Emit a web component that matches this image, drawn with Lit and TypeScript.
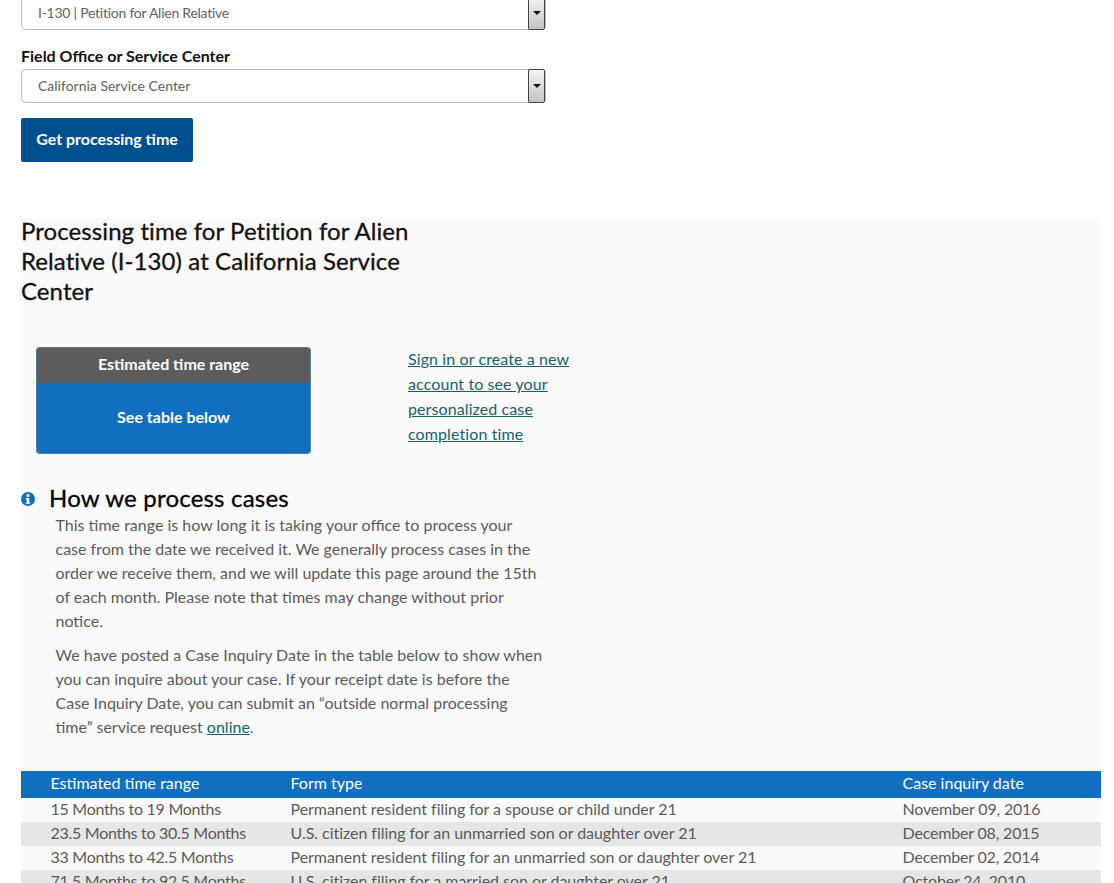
import { LitElement, html, css } from "lit";
import { customElement } from "lit/decorators.js";

const rows = [
  ["15 Months to 19 Months", "Permanent resident filing for a spouse or child under 21", "November 09, 2016"],
  ["23.5 Months to 30.5 Months", "U.S. citizen filing for an unmarried son or daughter over 21", "December 08, 2015"],
  ["33 Months to 42.5 Months", "Permanent resident filing for an unmarried son or daughter over 21", "December 02, 2014"],
  ["71.5 Months to 92.5 Months", "U.S. citizen filing for a married son or daughter over 21", "October 24, 2010"],
];

@customElement("app-root")
export class AppRoot extends LitElement {
  static styles = css`
    :host { display: block; height: 883px; overflow: hidden; background: #fff; font-family: "Lato", "Noto Sans", sans-serif; color: #5a5a5a; font-size: 16px; }
    .form { padding: 0 0 0 21px; width: 525px; margin-top: -4px; }
    .select { box-sizing: border-box; height: 34px; width: 525px; border: 1px solid #bbb; border-radius: 4px; background: #fff; display: flex; align-items: center; justify-content: space-between; padding: 0 0 2px 16px; font-size: 14px; color: #5f5f5f; }
    .select .first { letter-spacing: -0.25px; }
    .arrow { width: 17px; height: 34px; box-sizing: border-box; border: 1px solid #444; border-radius: 2px; margin: 0 0 -2px 0; background: linear-gradient(#f4f4f4, #c4c4c4); display: flex; align-items: center; justify-content: center; }
    .arrow i { display: block; width: 0; height: 0; border-left: 4px solid transparent; border-right: 4px solid transparent; border-top: 4px solid #111; }
    label { display: block; font-weight: 700; color: #111; font-size: 16px; line-height: 20px; margin: 16px 0 3px; }
    .btn { display: inline-block; margin-top: 15px; height: 42px; padding-bottom: 2px; width: 172px; line-height: 42px; text-align: center; background: #00508f; color: #fff; font-weight: 700; font-size: 16px; border-radius: 2px; }
    .panel { margin: 56px 13px 0 21px; background: #fafafa; height: 700px; }
    h1 { margin: 0; width: 400px; font-weight: 400; font-size: 24px; line-height: 30px; color: #111; letter-spacing: 0.08px; -webkit-text-stroke: 0.3px #111; position: relative; top: -2px; }
    .mid { display: flex; margin-top: 39px; padding-left: 15px; }
    .box { box-sizing: border-box; width: 275px; height: 107px; border-radius: 3px; overflow: hidden; border: 1px solid #5a7d9e; color: #fff; font-weight: 700; text-align: center; }
    .box .h { height: 36px; line-height: 33px; background: #5c5c5c; margin: -1px -1px 0; }
    .box .b { height: 70px; line-height: 68px; background: #116fc0; }
    .link { margin-left: 97px; margin-top: -1px; width: 180px; line-height: 25px; color: #15616d; text-decoration: underline; letter-spacing: 0.1px; }
    .how { display: flex; align-items: center; margin-top: 29px; height: 30px; }
    .how svg { width: 14px; height: 14px; margin: 2px 14px 0 0; }
    h2 { margin: 0; font-weight: 400; font-size: 24px; color: #000; line-height: 30px; letter-spacing: 0.2px; -webkit-text-stroke: 0.3px #000; }
    .text { margin-left: 34.5px; width: 490px; line-height: 24px; color: #5a5a5a; }
    .text p { margin: 0 0 10px; }
    .text a { color: #15616d; }
    .table { margin-top: 32px; }
    .tr { display: grid; grid-template-columns: 240px 612px 1fr; padding-left: 29.5px; height: 24px; line-height: 22px; }
    .tr span:nth-child(1) { letter-spacing: -0.28px; }
    .tr span:nth-child(2) { letter-spacing: -0.04px; }
    .tr span:nth-child(3) { letter-spacing: -0.18px; }
    .tr.head { height: 27px; line-height: 24px; background: #116fc0; color: #fff; }
    .tr.head span { letter-spacing: 0; }
    .tr.alt { background: #e6e6e6; }
    .tr.plain { background: #fafafa; }
  `;

  render() {
    return html`
      <div class="form">
        <div class="select"><span class="first">I-130 | Petition for Alien Relative</span><div class="arrow"><i></i></div></div>
        <label>Field Office or Service Center</label>
        <div class="select"><span>California Service Center</span><div class="arrow"><i></i></div></div>
        <div class="btn">Get processing time</div>
      </div>
      <div class="panel">
        <h1>Processing time for Petition for Alien Relative (I-130) at California Service Center</h1>
        <div class="mid">
          <div class="box"><div class="h">Estimated time range</div><div class="b">See table below</div></div>
          <div class="link">Sign in or create a new account to see your personalized case completion time</div>
        </div>
        <div class="how">
          <svg viewBox="0 0 14 14"><circle cx="7" cy="7" r="7" fill="#116fc0"/><circle cx="7" cy="3.6" r="1.5" fill="#fff"/><path d="M4.8 6h3.4v4.4h1v1.4H4.8v-1.4h1V7.4h-1z" fill="#fff"/></svg>
          <h2>How we process cases</h2>
        </div>
        <div class="text">
          <p>This time range is how long it is taking your office to process your case from the date we received it. We generally process cases in the order we receive them, and we will update this page around the 15th of each month. Please note that times may change without prior notice.</p>
          <p>We have posted a Case Inquiry Date in the table below to show when you can inquire about your case. If your receipt date is before the Case Inquiry Date, you can submit an “outside normal processing time” service request <a href="#">online</a>.</p>
        </div>
        <div class="table">
          <div class="tr head"><span>Estimated time range</span><span>Form type</span><span>Case inquiry date</span></div>
          ${rows.map((r, i) => html`<div class="tr ${i % 2 ? "alt" : "plain"}"><span>${r[0]}</span><span>${r[1]}</span><span>${r[2]}</span></div>`)}
        </div>
      </div>
    `;
  }
}
